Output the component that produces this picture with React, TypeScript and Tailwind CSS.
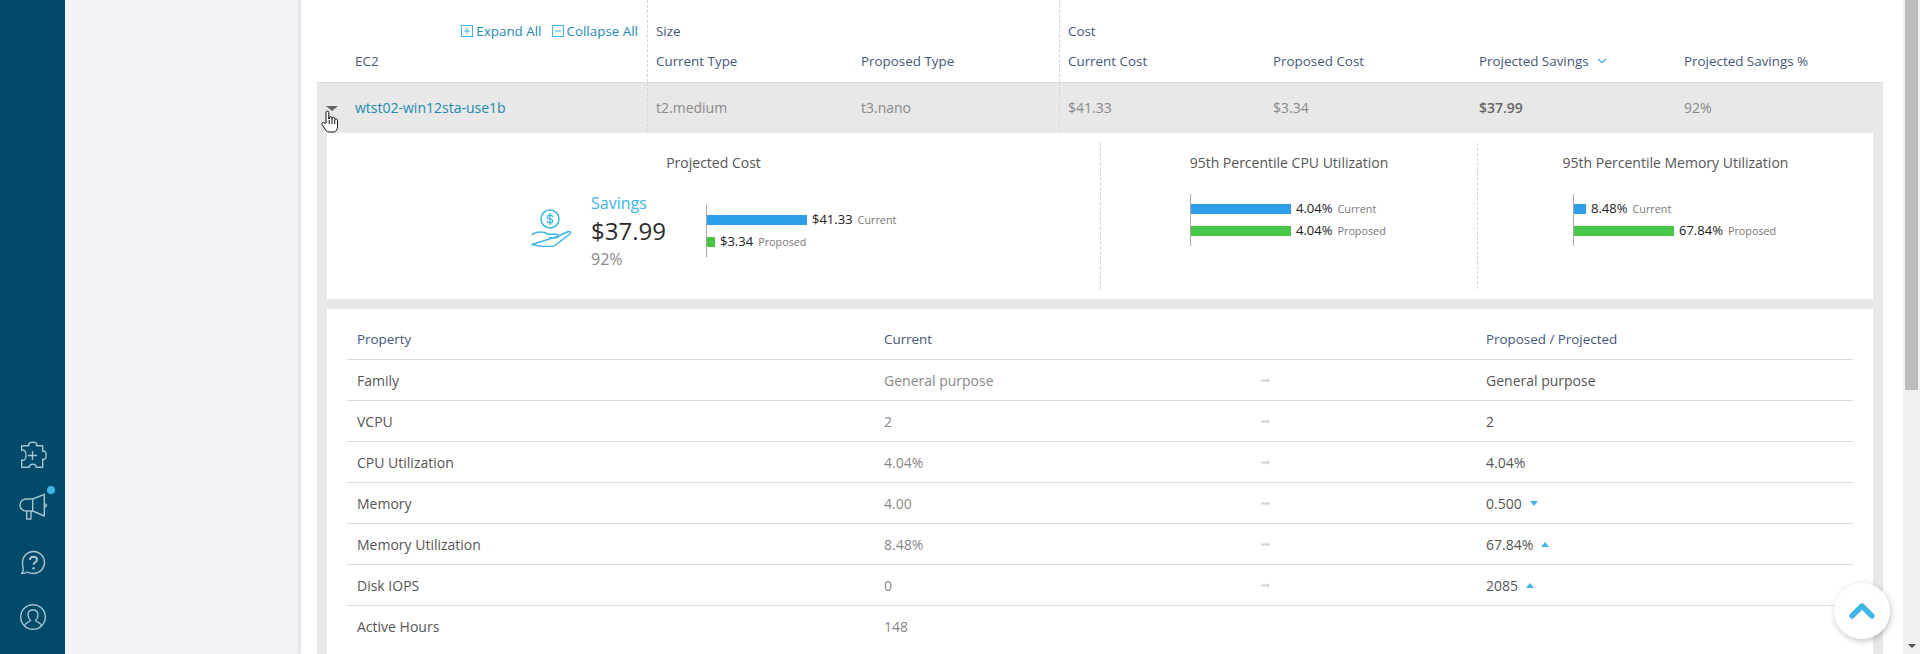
import { ChevronDown, ChevronUp } from "lucide-react";

const ROWS = [
  { name: "Family", current: "General purpose", proposed: "General purpose" },
  { name: "VCPU", current: "2", proposed: "2" },
  { name: "CPU Utilization", current: "4.04%", proposed: "4.04%" },
  { name: "Memory", current: "4.00", proposed: "0.500", trend: "down" },
  { name: "Memory Utilization", current: "8.48%", proposed: "67.84%", trend: "up" },
  { name: "Disk IOPS", current: "0", proposed: "2085", trend: "up" },
  { name: "Active Hours", current: "148", proposed: "" },
];

const HEAD = ["Current Type", "Proposed Type", "Current Cost", "Proposed Cost", "Projected Savings", "Projected Savings %"];
const VALUES = ["t2.medium", "t3.nano", "$41.33", "$3.34", "$37.99", "92%"];

function Sidebar() {
  return (
    <div className="w-[65px] shrink-0 bg-[#014a69] flex flex-col items-center justify-end pb-[10px] text-[#a6c3cf]">
      <div className="h-[54px] flex items-center">
        <svg width="28" height="28" viewBox="0 0 28 28" fill="none" stroke="currentColor" strokeWidth="1.4" strokeLinejoin="round" className="overflow-visible">
          <path d="M2.700 4.700H10c-1-1.500-.3-3.500 3.700-3.500s4.700 2 3.700 3.500h6.300v5.800c1.500-1 3.500-.3 3.500 3.800s-2 4.700-3.500 3.700v8.300H17c.5-1.500-.5-3-3.300-3s-3.800 1.500-3.300 3H2.700V19c2 1 4.300 0 4.300-4.800S5 8.500 2.700 9.500z" />
          <path d="M9 14.500h9M13.500 10v9" />
        </svg>
      </div>
      <div className="relative h-[54px] flex items-center">
        <svg width="28" height="28" viewBox="0 0 28 28" fill="none" stroke="currentColor" strokeWidth="1.4" strokeLinejoin="round" className="overflow-visible">
          <path d="M13.700 4l11.600-4.700V21l-11.600-5H7a6 6 0 0 1 0-12z" />
          <path d="M13.700 4v12M7.700 16v8H12v-8M25.300 8.300l2.400 2.200-2.400 2.200" />
        </svg>
        <span className="absolute right-[-8px] top-[4px] w-[8px] h-[8px] rounded-full bg-[#3db5e6]" />
      </div>
      <div className="h-[54px] flex items-center">
        <svg width="28" height="28" viewBox="0 0 28 28" fill="none" stroke="currentColor" strokeWidth="1.4" strokeLinejoin="round">
          <path d="M14.500 2.500a11 11 0 0 1 0 22c-2.500 0-4.500-.5-6-1.500-1.500 1-3.500 1.500-6 1.500 1-1 2-2.500 1.800-4.500-.5-1.500-.8-3-.8-6.500a11 11 0 0 1 11-11z" />
          <path d="M11 11c0-2 1.500-3.300 3.500-3.300S18 9 18 10.800c0 2.400-3.500 2.600-3.500 5" strokeWidth="2" />
          <circle cx="14.500" cy="19.300" r="1.200" fill="currentColor" stroke="none" />
        </svg>
      </div>
      <div className="h-[54px] flex items-center">
        <svg width="28" height="28" viewBox="0 0 28 28" fill="none" stroke="currentColor" strokeWidth="1.4">
          <circle cx="14" cy="14" r="12.300" />
          <path d="M5.500 23c.6-3.500 5-3.600 6-5.500-1.800-1.500-2.500-3.500-2.500-5.500 0-3 2-5 5-5s5 2 5 5c0 2-.7 4-2.500 5.500 1 1.900 5.400 2 6 5.500" />
        </svg>
      </div>
    </div>
  );
}

function Savings() {
  return (
    <div className="flex items-start">
      <svg width="40" height="42" viewBox="0 0 40 42" fill="none" stroke="#3db5e6" strokeWidth="1.500" strokeLinejoin="round" strokeLinecap="round" className="mt-[13px] mr-[20px] shrink-0">
        <circle cx="19" cy="14" r="9" />
        <path d="M21.800 11.500c-.4-.9-1.400-1.400-2.800-1.400-1.600 0-2.700.8-2.700 1.900s1 1.600 2.700 1.900 2.700.9 2.700 2-1.100 1.900-2.700 1.900c-1.400 0-2.400-.5-2.800-1.400M19 8.500v11" strokeWidth="1.300" />
        <path d="M1 29.300c6-3 11-3.300 16.300 0H25.700c2.300.8 2 3.500 0 3.500H19" />
        <path d="M26.300 31.500l11-5c2-.5 3 1 1.500 2.500L24 40.500c-1 .7-2 1-3 1H11L1 39.500z" />
      </svg>
      <div className="w-[115px] shrink-0">
        <div className="text-[16px] leading-[22px] text-[#3db5e6]">Savings</div>
        <div className="text-[24px] leading-[34px] text-[#2b2b2b] font-medium">$37.99</div>
        <div className="text-[16px] leading-[22px] text-[#888]">92%</div>
      </div>
    </div>
  );
}

function Bars({ a, b, aw, bw, className = "" }: { a: string; b: string; aw: number; bw: number; className?: string }) {
  return (
    <div className={`w-[180px] shrink-0 h-[52px] border-l border-[#aaa] flex flex-col justify-center gap-[12px] ${className}`}>
      <Bar value={a} label="Current" color="bg-[#2d9ee9]" width={aw} />
      <Bar value={b} label="Proposed" color="bg-[#47c747]" width={bw} />
    </div>
  );
}

function Bar({ value, label, color, width }: { value: string; label: string; color: string; width: number }) {
  return (
    <div className="flex items-center h-[10px] whitespace-nowrap">
      <div className={`h-[10px] shrink-0 ${color}`} style={{ width }} />
      <span className="ml-[5px] text-[13px] text-[#222]">{value}</span>
      <span className="ml-[5px] text-[10.800px] text-[#777]">{label}</span>
    </div>
  );
}

function Summary() {
  return (
    <div className="bg-white mx-[10px] h-[166px] grid grid-cols-[773px_377px_396px] pt-[10px]">
      <div className="flex flex-col items-center h-[146px]">
        <div className="text-[14px] leading-[20px] text-[#555] mt-[10px]">Projected Cost</div>
        <div className="flex items-start mt-[19px] ml-[-10px]">
          <Savings />
          <Bars a="$41.33" b="$3.34" aw={100} bw={8} className="mt-[13px]" />
        </div>
      </div>
      <div className="border-l border-dashed border-[#d5d5d5] h-[146px]">
        <div className="text-[14px] leading-[20px] text-[#555] mt-[10px] text-center">95th Percentile CPU Utilization</div>
        <Bars a="4.04%" b="4.04%" aw={100} bw={100} className="mt-[21px] ml-[89px]" />
      </div>
      <div className="border-l border-dashed border-[#d5d5d5] h-[146px]">
        <div className="text-[14px] leading-[20px] text-[#555] mt-[10px] text-center">95th Percentile Memory Utilization</div>
        <Bars a="8.48%" b="67.84%" aw={12} bw={100} className="mt-[21px] ml-[95px]" />
      </div>
    </div>
  );
}

function Details() {
  return (
    <div className="bg-white mx-[10px] mt-[10px] px-[20px] pb-[30px]">
      <div className="grid grid-cols-[527px_377px_225px_1fr] h-[51px] items-center pl-[10px] border-b border-[#ddd] text-[13.400px] text-[#44587a] pt-[11px]">
        <div>Property</div>
        <div>Current</div>
        <div />
        <div>Proposed / Projected</div>
      </div>
      {ROWS.map((r, i) => (
        <div key={r.name} className={`grid grid-cols-[527px_377px_225px_1fr] h-[41px] items-center pl-[10px] text-[14px] ${i < ROWS.length - 1 ? "border-b border-[#ddd]" : ""}`}>
          <div className="text-[#555]">{r.name}</div>
          <div className="text-[#888]">{r.current}</div>
          <div>
            {r.proposed && (
              <svg width="9" height="5" viewBox="0 0 9 5" fill="#d4d4d4"><path d="M0 1.500h6.500V0L9 2.500 6.500 5V3.500H0z" /></svg>
            )}
          </div>
          <div className="text-[#555] flex items-center gap-[8px]">
            {r.proposed}
            {r.trend === "down" && <span className="w-0 h-0 border-x-[4.500px] border-x-transparent border-t-[5px] border-t-[#3db5e6]" />}
            {r.trend === "up" && <span className="w-0 h-0 border-x-[4.500px] border-x-transparent border-b-[5px] border-b-[#3db5e6]" />}
          </div>
        </div>
      ))}
    </div>
  );
}

function Table() {
  return (
    <div className="ml-[16px] mr-[20px] text-[13.400px]">
      <div className="grid grid-cols-[330px_205px_207px_205px_206px_205px_1fr] border-b border-[#ddd] h-[83px]">
        <div className="pt-[21px] pr-[9px] flex flex-col">
          <div className="h-[20px] flex items-center justify-end gap-[10px] text-[#1a8ab3] leading-[20px]">
            <span className="flex items-center gap-[3px]">
              <svg width="12" height="12" viewBox="0 0 12 12" fill="none" stroke="#3db5e6"><rect x=".5" y=".5" width="11" height="11" /><path d="M3 6h6M6 3v6" /></svg>
              Expand All
            </span>
            <span className="flex items-center gap-[3px]">
              <svg width="12" height="12" viewBox="0 0 12 12" fill="none" stroke="#3db5e6"><rect x=".5" y=".5" width="11" height="11" /><path d="M3 6h6" /></svg>
              Collapse All
            </span>
          </div>
          <div className="pl-[38px] mt-[10px] leading-[20px] text-[#44587a]">EC2</div>
        </div>
        {HEAD.map((h, i) => (
          <div key={h} className={`text-[#44587a] leading-[20px] ${i === 0 || i === 2 ? "pl-[8px] border-l border-dashed border-[#d5d5d5]" : "pl-[9px]"}`}>
            <div className="h-[21px] mt-[21px]">{i === 0 ? "Size" : i === 2 ? "Cost" : ""}</div>
            <div className="flex items-center gap-[6px] mt-[9px]">
              {h}
              {h === "Projected Savings" && <ChevronDown size={14} strokeWidth={2} className="text-[#3db5e6]" />}
            </div>
          </div>
        ))}
      </div>
      <div className="grid grid-cols-[330px_205px_207px_205px_206px_205px_1fr] h-[50px] bg-[#e8e8e8] items-center relative text-[14px] pb-[1px]">
        <div className="pl-[38px] text-[#1a8ab3]">wtst02-win12sta-use1b</div>
        {VALUES.map((v, i) => (
          <div key={v} className={`h-full flex items-center ${i === 0 || i === 2 ? "pl-[8px] border-l border-dashed border-[#d5d5d5]" : "pl-[9px]"} ${v === "$37.99" ? "text-[#666] font-semibold" : "text-[#888]"}`}>
            {v}
          </div>
        ))}
        <span className="absolute left-[9px] top-[23px] w-0 h-0 border-x-[6px] border-x-transparent border-t-[5px] border-t-[#666]" />
        <svg width="18" height="23" viewBox="0 0 18 23" className="absolute left-[4px] top-[27px]" fill="#fff" stroke="#111" strokeWidth="1" strokeLinejoin="round">
          <path d="M5 13V2.500a1.400 1.400 0 0 1 2.800 0V9h.5V8a1.300 1.300 0 0 1 2.600 0v1.500h.3v-.8a1.300 1.300 0 0 1 2.600 0v1h.3a1.300 1.300 0 0 1 2.400.8v6c0 3-1.500 5-3.500 5.500H8c-2 0-3-1.500-4-3L1 14.500c-.8-1.500 1-2.800 2.300-1.500z" />
          <path d="M8.200 10v4M11 10v4M13.700 10v4" fill="none" />
        </svg>
      </div>
      <div className="bg-[#e8e8e8]">
        <Summary />
        <Details />
      </div>
    </div>
  );
}

export default function App() {
  return (
    <div className="relative h-[654px] w-[1920px] overflow-hidden flex bg-[#f1f3f7] font-['Open_Sans',sans-serif]">
      <Sidebar />
      <div className="w-[235px] shrink-0" />
      <div className="flex-1 bg-white border-l border-[#e3e3e8] shadow-[-1px_0_3px_rgba(0,0,0,0.08)] overflow-hidden">
        <Table />
      </div>
      <div className="w-[17px] shrink-0 bg-[#f1f1f1] flex flex-col justify-between items-center pb-[6px]">
        <div className="w-[13px] h-[390px] bg-[#bdbdbd]" />
        <span className="w-0 h-0 border-x-[4px] border-x-transparent border-t-[4px] border-t-[#505050]" />
      </div>
      <button className="absolute left-[1834px] top-[583px] w-[56px] h-[56px] rounded-full bg-white/90 shadow-[1px_2px_6px_rgba(0,0,0,0.25)] flex items-center justify-center">
        <ChevronUp size={40} strokeWidth={3.2} className="text-[#3db5e6]" />
      </button>
    </div>
  );
}
